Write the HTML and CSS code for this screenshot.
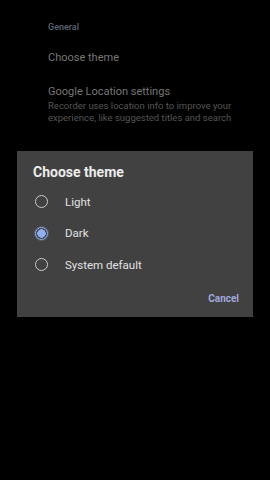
FILE: index.html
```html
<!DOCTYPE html>
<html>
	<head>
		<title>Settings</title>
		<meta charset="utf-8" />
		<link rel="stylesheet" href="styles.css">
	</head>
	<body>
		<div class="settings">
			<div class="section-title">General</div>
			<div class="item">
				<div class="item-title">Choose theme</div>
			</div>
			<div class="item">
				<div class="item-title">Google Location settings</div>
				<div class="item-sub">Recorder uses location info to improve your experience, like suggested titles and search</div>
			</div>
		</div>

		<div class="scrim">
			<div class="dialog">
				<h2 class="dialog-title">Choose theme</h2>
				<div class="option">
					<span class="radio"></span>
					<span class="option-label">Light</span>
				</div>
				<div class="option">
					<span class="radio radio-checked"></span>
					<span class="option-label">Dark</span>
				</div>
				<div class="option">
					<span class="radio"></span>
					<span class="option-label">System default</span>
				</div>
				<div class="actions">
					<span class="cancel">Cancel</span>
				</div>
			</div>
		</div>
	</body>
</html>
```

FILE: styles.css
```css
* {
	padding: 0;
	margin: 0;
	box-sizing: border-box;
}

body {
	font-family: "Roboto", "Noto Sans", sans-serif;
	background: #000;
	width: 270px;
	height: 480px;
	overflow: hidden;
	position: relative;
}

.settings {
	padding: 20px 0 0 48px;
}

.section-title {
	font-size: 9px;
	font-weight: 500;
	color: #5d6474;
	height: 14px;
	line-height: 14px;
}

.item {
	padding-top: 16px;
}

.item-title {
	font-size: 11px;
	color: #767676;
	line-height: 16px;
}

.item + .item {
	padding-top: 18px;
}

.item-sub {
	font-size: 9.5px;
	color: #555;
	line-height: 11.5px;
	padding-right: 28px;
}

.scrim {
	position: absolute;
	inset: 0;
	padding: 151px 17px 0;
}

.dialog {
	background: #414141;
	height: 166px;
	padding: 13px 14px 0 16px;
}

.dialog-title {
	font-size: 14px;
	font-weight: 700;
	color: #ececec;
	line-height: 17px;
	margin-bottom: 5px;
}

.option {
	display: flex;
	align-items: center;
	height: 31.5px;
	gap: 17px;
}

.radio {
	width: 13px;
	height: 13px;
	border-radius: 50%;
	border: 1.5px solid #c9c9c9;
	margin-left: 2px;
	flex-shrink: 0;
}

.radio-checked {
	border-color: #8fb0f0;
	background: radial-gradient(circle, #8fb0f0 0 4px, transparent 4.5px);
	box-shadow: 0 0 0 1px rgba(143, 176, 240, 0.25);
}

.option-label {
	font-size: 11.5px;
	color: #e2e2e2;
}

.actions {
	display: flex;
	justify-content: flex-end;
	padding-top: 12px;
}

.cancel {
	font-size: 10px;
	font-weight: 700;
	color: #a2a8df;
}
```
